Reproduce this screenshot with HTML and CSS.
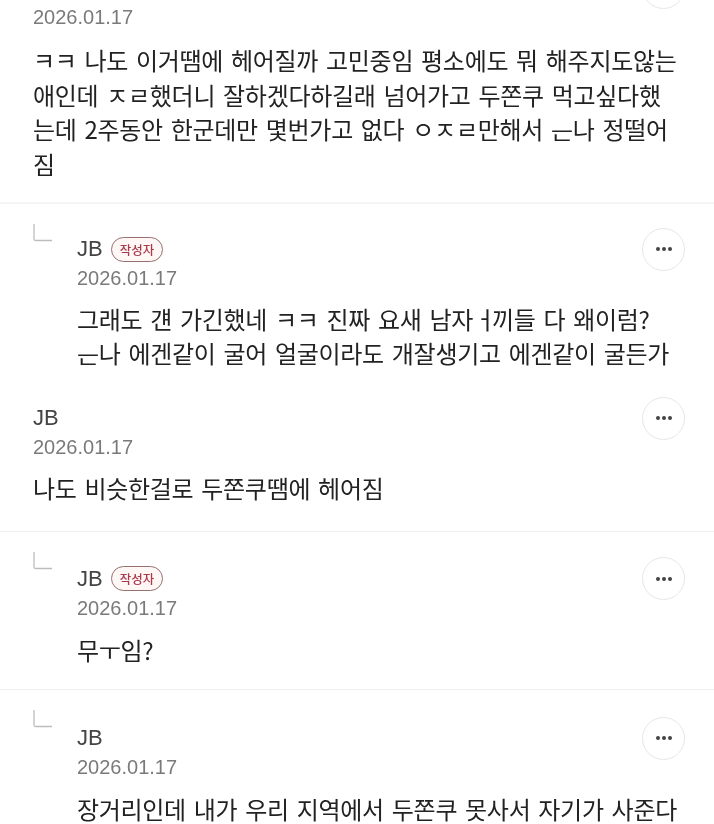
FILE: index.html
```html
<!DOCTYPE html>
<html lang="ko">
<head>
<meta charset="utf-8">
<title>댓글</title>
<link rel="stylesheet" href="styles.css">
</head>
<body>
<main class="list">
  <article class="comment first">
    <span class="more clipped"></span>
    <div class="date">2026.01.17</div>
    <p class="body">ㅋㅋ 나도 이거땜에 헤어질까 고민중임 평소에도 뭐 해주지도않는<br>애인데 ㅈㄹ했더니 잘하겠다하길래 넘어가고 두쫀쿠 먹고싶다했<br>는데 2주동안 한군데만 몇번가고 없다 ㅇㅈㄹ만해서 <span class="cut">는</span>나 정떨어<br>짐</p>
  </article>

  <article class="comment reply r1">
    <svg class="arrow" viewBox="0 0 20 18" width="20" height="18"><path d="M1 0V15Q1 16.500 2.500 16.500H19" fill="none" stroke="#bdbdbd" stroke-width="1.300"/></svg>
    <div class="main">
      <div class="head">
        <div class="who"><span class="name">JB</span><span class="badge">작성자</span></div>
        <button class="more"><i></i><i></i><i></i></button>
      </div>
      <div class="date">2026.01.17</div>
      <p class="body">그래도 걘 가긴했네 ㅋㅋ 진짜 요새 남자&#8202;<span class="side">ㅓ</span>끼들 다 왜이럼?<br><span class="cut">는</span>나 에겐같이 굴어 얼굴이라도 개잘생기고 에겐같이 굴든가</p>
    </div>
  </article>

  <article class="comment plain r2">
    <div class="main">
      <div class="head">
        <div class="who"><span class="name">JB</span></div>
        <button class="more"><i></i><i></i><i></i></button>
      </div>
      <div class="date">2026.01.17</div>
      <p class="body">나도 비슷한걸로 두쫀쿠땜에 헤어짐</p>
    </div>
  </article>

  <article class="comment reply r3">
    <svg class="arrow" viewBox="0 0 20 18" width="20" height="18"><path d="M1 0V15Q1 16.500 2.500 16.500H19" fill="none" stroke="#bdbdbd" stroke-width="1.300"/></svg>
    <div class="main">
      <div class="head">
        <div class="who"><span class="name">JB</span><span class="badge">작성자</span></div>
        <button class="more"><i></i><i></i><i></i></button>
      </div>
      <div class="date">2026.01.17</div>
      <p class="body">무ㅜ임?</p>
    </div>
  </article>

  <article class="comment reply r4">
    <svg class="arrow" viewBox="0 0 20 18" width="20" height="18"><path d="M1 0V15Q1 16.500 2.500 16.500H19" fill="none" stroke="#bdbdbd" stroke-width="1.300"/></svg>
    <div class="main">
      <div class="head">
        <div class="who"><span class="name">JB</span></div>
        <button class="more"><i></i><i></i><i></i></button>
      </div>
      <div class="date">2026.01.17</div>
      <p class="body">장거리인데 내가 우리 지역에서 두쫀쿠 못사서 자기가 사준다</p>
    </div>
  </article>
</main>
</body>
</html>
```
FILE: styles.css
```css
html, body { margin: 0; padding: 0; background: #fff; }
body {
  width: 714px;
  height: 824px;
  overflow: hidden;
  font-family: "Noto Sans CJK KR", "Noto Sans", sans-serif;
  color: #222;
}
.list { display: flex; flex-direction: column; filter: blur(0.45px); }
.comment { position: relative; padding: 0 29px 0 33px; }
.first { padding-top: 3px; padding-bottom: 21px; border-bottom: 2px solid #f5f5f5; }
.reply { display: flex; }
.r1 { padding-top: 30px; padding-bottom: 33px; }
.r1 .body { margin-top: 10px; line-height: 34px; }
.r2 { padding-bottom: 25px; border-bottom: 1px solid #eee; }
.r2 .body { margin-top: 10px; }
.r3 { padding-top: 32px; padding-bottom: 22px; border-bottom: 1px solid #eee; }
.r3 .body { margin-top: 11px; }
.r4 { padding-top: 33px; }
.r4 .body { margin-top: 15px; line-height: 26px; }
.arrow { position: absolute; left: 33px; top: 20px; }
.main { flex: 1; min-width: 0; }
.reply .main { margin-left: 44px; }
.head { display: flex; justify-content: space-between; align-items: center; height: 30px; }
.who { display: flex; align-items: center; gap: 8px; }
.name { font-family: "Liberation Sans", sans-serif; font-size: 22px; color: #444; }
.badge {
  font-size: 12.500px; line-height: 23px; height: 23px; padding: 0 8px;
  border: 1px solid #96716f; border-radius: 13px; color: #a83a4a; background: #fff6f6; font-weight: 500;
}
.date { font-family: "Liberation Sans", sans-serif; font-size: 20px; line-height: 28px; color: #7a7a7a; }
.body { margin: 12px 0 0; font-size: 24px; line-height: 34.500px; word-spacing: 1.500px; letter-spacing: -0.300px; color: #222; white-space: nowrap; }
.more {
  width: 43px; height: 43px; padding: 0; box-sizing: border-box;
  border: 1.500px solid #e6e6e6; border-radius: 50%; background: #fff;
  display: flex; align-items: center; justify-content: center; gap: 2px;
}
.more i { width: 4px; height: 4px; border-radius: 50%; background: #444; }
.clipped { position: absolute; right: 29px; top: -34px; display: block; }
.cut { position: relative; }
.cut::before { content: ""; position: absolute; left: 0; right: 0; top: 0; height: 52%; background: #fff; }
.side { letter-spacing: -4.300px; }
```
